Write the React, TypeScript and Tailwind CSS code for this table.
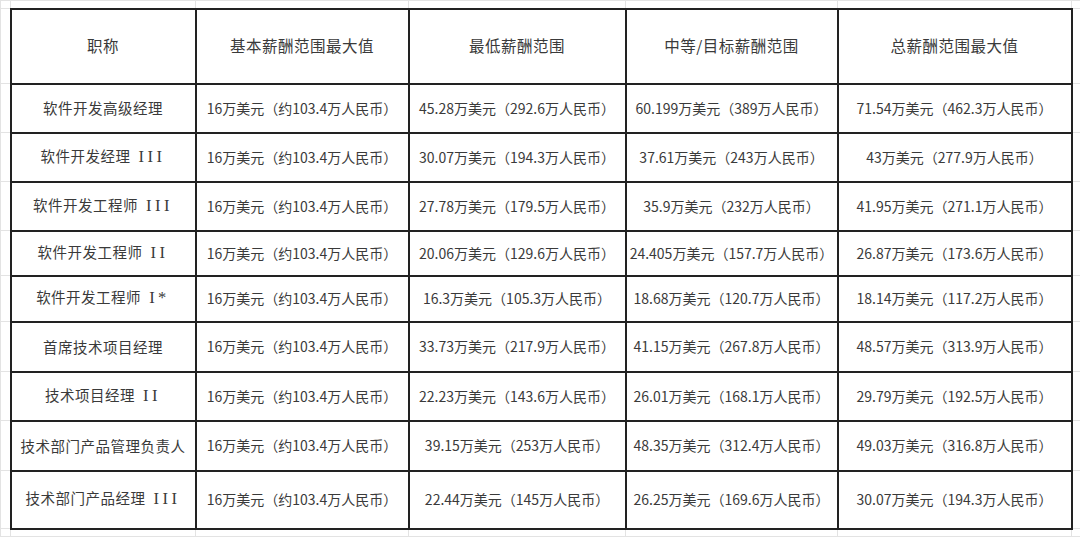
import React from 'react';

type Row = {
  title: string;
  level?: string;
  base: string;
  min: string;
  mid: string;
  total: string;
  h: string;
};

const BASE = '16万美元（约103.4万人民币）';

const rows: Row[] = [
  { title: '软件开发高级经理', base: BASE, min: '45.28万美元（292.6万人民币）', mid: '60.199万美元（389万人民币）', total: '71.54万美元（462.3万人民币）', h: 'h-[49px]' },
  { title: '软件开发经理', level: 'III', base: BASE, min: '30.07万美元（194.3万人民币）', mid: '37.61万美元（243万人民币）', total: '43万美元（277.9万人民币）', h: 'h-[49px]' },
  { title: '软件开发工程师', level: 'III', base: BASE, min: '27.78万美元（179.5万人民币）', mid: '35.9万美元（232万人民币）', total: '41.95万美元（271.1万人民币）', h: 'h-[49px]' },
  { title: '软件开发工程师', level: 'II', base: BASE, min: '20.06万美元（129.6万人民币）', mid: '24.405万美元（157.7万人民币）', total: '26.87万美元（173.6万人民币）', h: 'h-[45px]' },
  { title: '软件开发工程师', level: 'I*', base: BASE, min: '16.3万美元（105.3万人民币）', mid: '18.68万美元（120.7万人民币）', total: '18.14万美元（117.2万人民币）', h: 'h-[46px]' },
  { title: '首席技术项目经理', base: BASE, min: '33.73万美元（217.9万人民币）', mid: '41.15万美元（267.8万人民币）', total: '48.57万美元（313.9万人民币）', h: 'h-[50px]' },
  { title: '技术项目经理', level: 'II', base: BASE, min: '22.23万美元（143.6万人民币）', mid: '26.01万美元（168.1万人民币）', total: '29.79万美元（192.5万人民币）', h: 'h-[49px]' },
  { title: '技术部门产品管理负责人', base: BASE, min: '39.15万美元（253万人民币）', mid: '48.35万美元（312.4万人民币）', total: '49.03万美元（316.8万人民币）', h: 'h-[50px]' },
  { title: '技术部门产品经理', level: 'III', base: BASE, min: '22.44万美元（145万人民币）', mid: '26.25万美元（169.6万人民币）', total: '30.07万美元（194.3万人民币）', h: 'h-[58px]' },
];

const headers = ['职称', '基本薪酬范围最大值', '最低薪酬范围', '中等/目标薪酬范围', '总薪酬范围最大值'];

// empty spreadsheet cell around the table
const Blank = () => <td className="border border-[#e3e3e3] p-0" />;

export default function App() {
  return (
    <div className="w-[1080px] h-[537px] overflow-hidden bg-white text-[#3a3a3a] font-['Noto_Sans_CJK_SC','Noto_Sans',sans-serif]">
      <table className="table-fixed border-collapse w-[1080px]">
        <colgroup>
          <col className="w-[10px]" />
          <col className="w-[185px]" />
          <col className="w-[213px]" />
          <col className="w-[217px]" />
          <col className="w-[212px]" />
          <col className="w-[234px]" />
          <col className="w-[9px]" />
        </colgroup>
        <tbody>
          <tr className="h-[8px]">
            <Blank /><Blank /><Blank /><Blank /><Blank /><Blank /><Blank />
          </tr>
          <tr className="h-[75px]">
            <Blank />
            {headers.map((h) => (
              <td key={h} className="border-2 border-[#222] text-center text-[15.5px] tracking-[0.5px] p-0">
                {h}
              </td>
            ))}
            <Blank />
          </tr>
          {rows.map((r, i) => (
            <tr key={i} className={r.h}>
              <Blank />
              <td className="border-2 border-[#222] text-center text-[14.5px] p-0 whitespace-nowrap">
                <span className="tracking-[0.5px]">{r.title}</span>
                {r.level && (
                  <span className="font-['Liberation_Serif',serif] text-[16.5px] tracking-[3.5px] ml-[8px]">{r.level}</span>
                )}
              </td>
              {[r.base, r.min, r.mid, r.total].map((v, j) => (
                <td key={j} className="border-2 border-[#222] text-center text-[14px] p-0 whitespace-nowrap">
                  {v}
                </td>
              ))}
              <Blank />
            </tr>
          ))}
          <tr className="h-[8px]">
            <Blank /><Blank /><Blank /><Blank /><Blank /><Blank /><Blank />
          </tr>
        </tbody>
      </table>
    </div>
  );
}
